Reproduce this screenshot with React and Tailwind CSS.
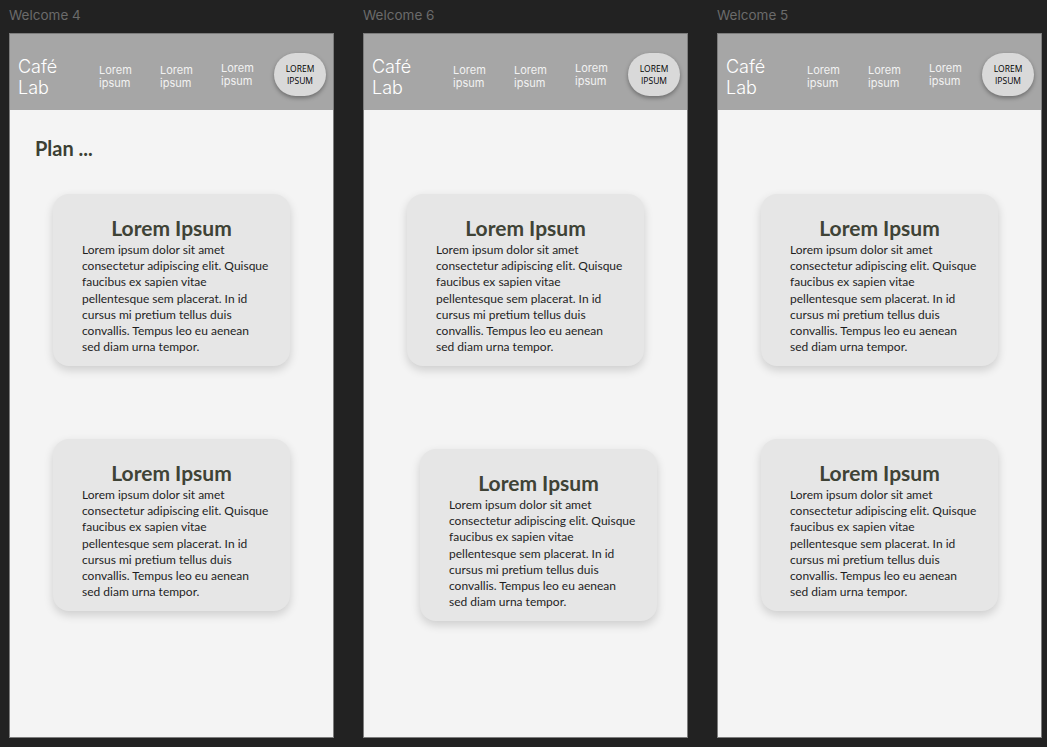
const lines = [
    "Lorem ipsum dolor sit amet",
    "consectetur adipiscing elit. Quisque",
    "faucibus ex sapien vitae",
    "pellentesque sem placerat. In id",
    "cursus mi pretium tellus duis",
    "convallis. Tempus leo eu aenean",
    "sed diam urna tempor.",
];

function Card({ className }) {
    return (
        <div className={`w-[237px] h-[172px] rounded-[16px] bg-[#e6e6e6] shadow-[0_4px_10px_rgba(0,0,0,0.16)] pt-[22px] pl-[29px] ${className}`}>
            <h2 className="text-center pr-[29px] text-[21px] leading-[24px] font-bold text-[#3f4336] font-['Lato',sans-serif]">Lorem Ipsum</h2>
            <p className="mt-[2px] text-[12px] leading-[16.2px] text-[#1e1e1e] font-['Lato',sans-serif] whitespace-nowrap">
                {lines.map((l) => (
                    <span key={l} className="block">{l}</span>
                ))}
            </p>
        </div>
    );
}

function Header() {
    return (
        <div className="h-[76px] bg-[#a6a6a6] flex items-center pl-[8px] pt-[8px] font-['Inter',sans-serif]">
            <div className="w-[81px] text-[18px] leading-[21px] text-white font-light pt-[1px]">
                Café<br />Lab
            </div>
            <div className="w-[61px] text-[11px] leading-[13px] text-[#f2f2f2] pt-[2px]">Lorem<br />ipsum</div>
            <div className="w-[61px] text-[11px] leading-[13px] text-[#f2f2f2] pt-[2px]">Lorem<br />ipsum</div>
            <div className="w-[53px] text-[11px] leading-[13px] text-[#f2f2f2] pb-[2px]">Lorem<br />ipsum</div>
            <button className="w-[52px] h-[43px] rounded-full bg-[#d9d9d9] shadow-[0_2px_4px_rgba(0,0,0,0.35)] text-[8.5px] leading-[12px] text-black font-['Open_Sans',sans-serif] mb-[3px]">
                LOREM<br />IPSUM
            </button>
        </div>
    );
}

function Frame({ title, heading, second }) {
    return (
        <div className="w-[325px] flex flex-col">
            <div className="h-[33px] pt-[6px] text-[13.5px] leading-[18px] text-[#6b6b6b] font-['Inter',sans-serif]">{title}</div>
            <div className="h-[705px] border border-[#7d7d7d] bg-[#f4f4f4] flex flex-col overflow-hidden">
                <Header />
                <div className="h-[84px] pt-[26px] pl-[25px]">
                    {heading && (
                        <h1 className="text-[20px] leading-[24px] font-bold text-[#3c3f33] font-['Lato',sans-serif]">{heading}</h1>
                    )}
                </div>
                <Card className="ml-[43px]" />
                {second === "shift" ? (
                    <Card className="ml-[56px] mt-[83px]" />
                ) : (
                    <Card className="ml-[43px] mt-[73px]" />
                )}
            </div>
        </div>
    );
}

export default function App() {
    return (
        <div className="w-[1047px] h-[747px] bg-[#222222] pl-[9px] flex gap-[29px] overflow-hidden">
            <Frame title="Welcome 4" heading="Plan ..." />
            <Frame title="Welcome 6" second="shift" />
            <Frame title="Welcome 5" />
        </div>
    );
}
